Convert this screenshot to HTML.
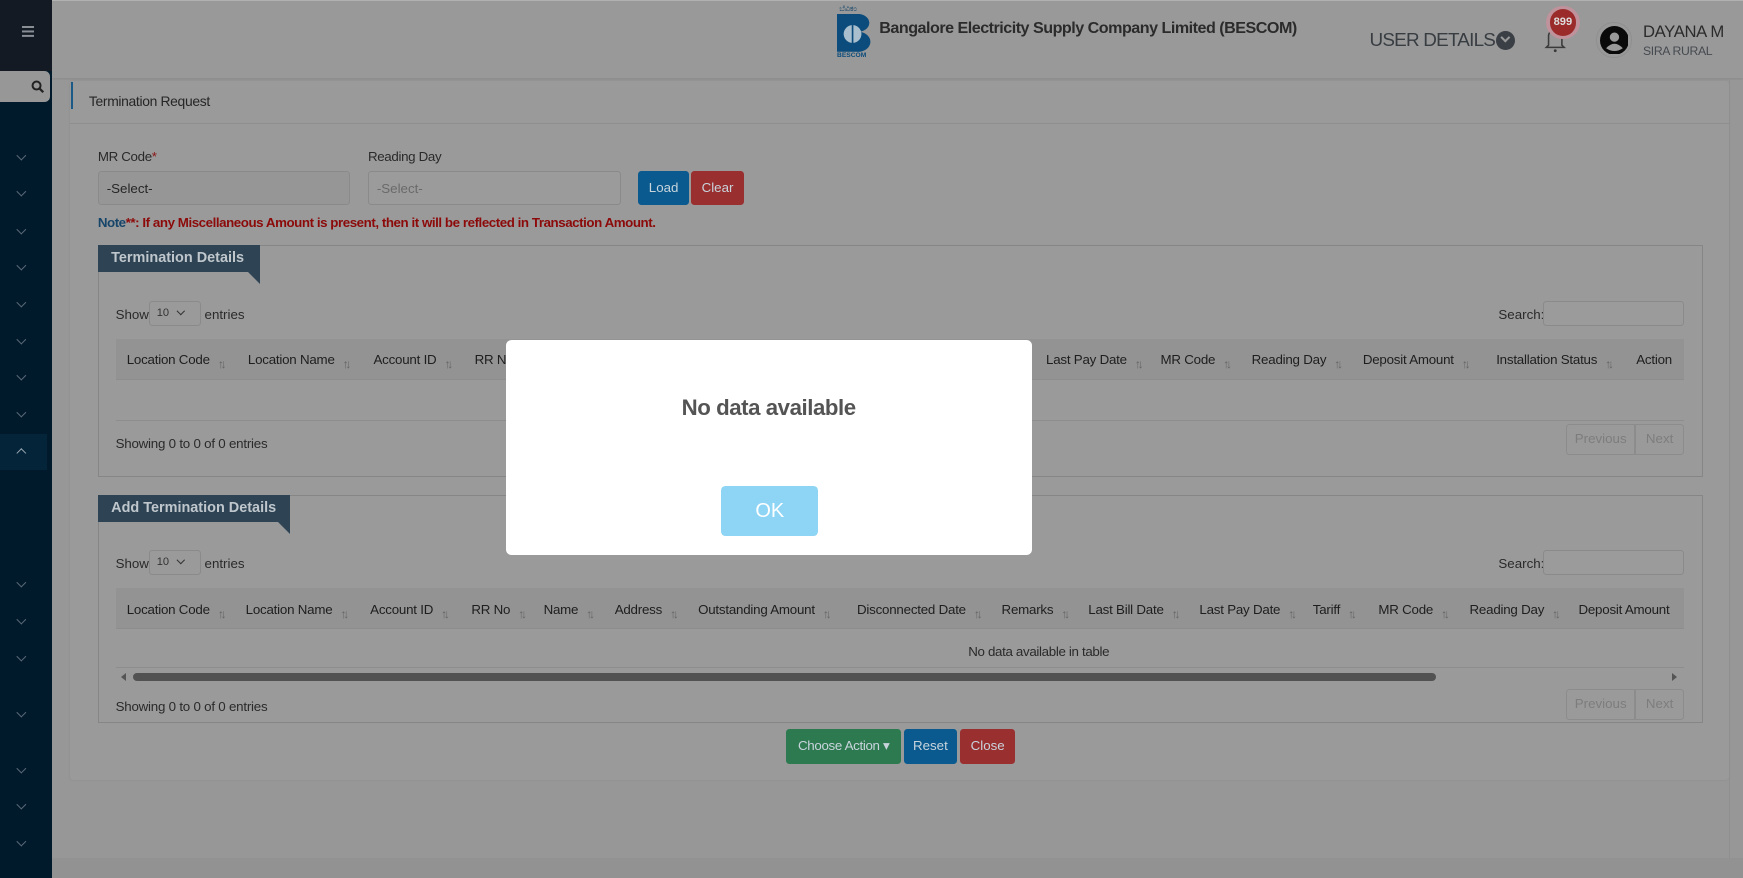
<!DOCTYPE html>
<html><head><meta charset="utf-8">
<style>
html{zoom:1.1116;}
*{box-sizing:border-box;margin:0;padding:0}
body{width:1568px;height:790px;overflow:hidden;position:relative;background:#999;font-family:"Liberation Sans",sans-serif;font-size:12px;color:#222}
.a{position:absolute}
.t{position:absolute;white-space:nowrap}
.th{position:absolute;white-space:nowrap;color:#1e1e1e;font-size:12px;letter-spacing:-0.2px}
.th i{font-style:normal;color:#666;font-size:11px;margin-left:7px;letter-spacing:-3px;position:relative;top:3px}
.chev{position:absolute;left:16px;width:6px;height:6px;border-right:1.3px solid #5d6b78;border-bottom:1.3px solid #5d6b78;transform:rotate(45deg)}
.btn{position:absolute;color:#c8d4dc;font-size:12px;text-align:center;border-radius:3px}
.box{position:absolute;border:1px solid #868686}
.tab{position:absolute;background:#2e4353;color:#bfc7cd;font-weight:bold;font-size:13px;padding:5px 0 0 12px}
.tri{position:absolute;width:0;height:0;border-top:11px solid #2e4353;border-left:11px solid transparent}
.inp{position:absolute;border:1px solid #8a8a8a;border-radius:3px;background:#9b9b9b}
.pg{position:absolute;border:1px solid #8c8c8c;color:#7d7d7d;font-size:12px;text-align:center;line-height:26px}
</style></head><body>
<div class="a" style="left:0;top:0;width:1568px;height:1px;background:#b5b5b5"></div>
<div class="a" style="left:47px;top:1px;width:1521px;height:69px;background:#999;box-shadow:0 2px 3px #8a8a8a"></div>
<div class="a" style="left:47px;top:72px;width:1521px;height:700px;background:#979797"></div>
<div class="a" style="left:47px;top:772px;width:1521px;height:18px;background:#929292"></div>
<div class="a" style="left:0;top:0;width:47px;height:790px;background:#001a2c"></div>
<div class="a" style="left:0;top:0;width:47px;height:64px;background:#131a24"></div>
<div class="a" style="left:20px;top:23px;width:11px;height:2px;background:#8a8f96;box-shadow:0 4px 0 #8a8f96,0 8px 0 #8a8f96"></div>
<div class="a" style="left:0;top:64px;width:45px;height:28px;background:#979797;border-radius:0 5px 5px 0"></div>
<svg class="a" style="left:28px;top:72px" width="12" height="12"><circle cx="5" cy="5" r="3.6" fill="none" stroke="#222" stroke-width="1.8"/><line x1="7.5" y1="7.5" x2="11" y2="11" stroke="#222" stroke-width="2"/></svg>
<div class="chev" style="top:137px"></div><div class="chev" style="top:169px"></div><div class="chev" style="top:203px"></div><div class="chev" style="top:236px"></div><div class="chev" style="top:269px"></div><div class="chev" style="top:302px"></div><div class="chev" style="top:335px"></div><div class="chev" style="top:368px"></div>
<div class="a" style="left:0;top:390px;width:42px;height:33px;background:#032439"></div>
<div class="chev" style="top:405px;transform:rotate(225deg);border-color:#9aa6b0"></div>
<div class="chev" style="top:521px"></div><div class="chev" style="top:554px"></div><div class="chev" style="top:587px"></div><div class="chev" style="top:638px"></div><div class="chev" style="top:688px"></div><div class="chev" style="top:721px"></div><div class="chev" style="top:754px"></div>
<div class="t" style="left:755px;top:4px;font-size:7px;color:#0a3f66">ಬೆವಿಕಂ</div>
<svg class="a" style="left:753px;top:13px" width="34" height="34"><path d="M0 0 H18 A10 8 0 0 1 20 16 A11 9 0 0 1 18 34 H0 Z" fill="#0b4c7c"/><circle cx="14" cy="18" r="8" fill="#a9bfce"/><line x1="14" y1="10" x2="14" y2="27" stroke="#0b4c7c" stroke-width="1.5"/></svg>
<div class="t" style="left:753px;top:47px;font-size:6px;font-weight:bold;color:#0b4c7c">BESCOM</div>
<div class="t" style="left:791px;top:17px;font-size:14.5px;font-weight:bold;color:#2b2b2b;letter-spacing:-0.45px">Bangalore Electricity Supply Company Limited (BESCOM)</div>
<div class="t" style="left:1232px;top:27px;font-size:17px;color:#383d42;letter-spacing:-0.7px">USER DETAILS</div>
<div class="a" style="left:1346px;top:28px;width:17px;height:17px;border-radius:50%;background:#3a3f45"></div>
<div class="a" style="left:1351px;top:31px;width:6px;height:6px;border-right:2px solid #999;border-bottom:2px solid #999;transform:rotate(45deg)"></div>
<svg class="a" style="left:1388px;top:22px" width="22" height="26"><path d="M5 19 V11 A6 6 0 0 1 17 11 V19 L19 21 H3 Z" fill="none" stroke="#3a3a3a" stroke-width="1.4"/><circle cx="11" cy="24" r="1.3" fill="#3a3a3a"/></svg>
<div class="a" style="left:1391px;top:5px;width:30px;height:30px;border-radius:50%;background:#c0929c"></div>
<div class="a" style="left:1394px;top:8px;width:24px;height:24px;border-radius:50%;background:#9b2b2b;color:#ddd;font-size:10px;font-weight:bold;text-align:center;line-height:24px">899</div>
<div class="a" style="left:1436px;top:20px;width:32px;height:32px;border-radius:50%;border:1px solid #8f8f8f"></div>
<svg class="a" style="left:1439px;top:23px" width="26" height="26"><circle cx="13" cy="13" r="13" fill="#0a0a0a"/><circle cx="13" cy="10" r="4.2" fill="#999"/><path d="M5.5 20 Q13 12 20.5 20 Q13 25 5.5 20Z" fill="#999"/></svg>
<div class="t" style="left:1478px;top:20px;font-size:15px;color:#2b2b2b;letter-spacing:-0.3px">DAYANA M</div>
<div class="t" style="left:1478px;top:40px;font-size:11px;color:#454a50;letter-spacing:-0.3px">SIRA RURAL</div>
<div class="a" style="left:63px;top:73px;width:1492px;height:629px;background:#9a9a9a;border-radius:3px;box-shadow:0 0 2px #8c8c8c"></div>
<div class="a" style="left:64px;top:74px;width:2px;height:24px;background:#1b5a86"></div>
<div class="t" style="left:80px;top:84px;font-size:12.5px;color:#262626;letter-spacing:-0.3px">Termination Request</div>
<div class="a" style="left:63px;top:111px;width:1492px;height:1px;background:#8e8e8e"></div>
<div class="t" style="left:88px;top:134px;color:#2a2a2a;letter-spacing:-0.3px">MR Code<span style="color:#8a1515">*</span></div>
<div class="t" style="left:331px;top:134px;color:#2a2a2a;letter-spacing:-0.3px">Reading Day</div>
<div class="inp" style="left:88px;top:154px;width:227px;height:30px;background:#969696"></div>
<div class="t" style="left:96px;top:163px;color:#262626">-Select-</div>
<div class="inp" style="left:331px;top:154px;width:228px;height:30px"></div>
<div class="t" style="left:339px;top:163px;color:#6a6a6a">-Select-</div>
<div class="btn" style="left:574px;top:154px;width:46px;height:30px;background:#0a5a8f;line-height:30px">Load</div>
<div class="btn" style="left:622px;top:154px;width:47px;height:30px;background:#9a2f2f;line-height:30px">Clear</div>
<div class="t" style="left:88px;top:193px;font-size:12px;font-weight:bold;color:#8c0a0a;letter-spacing:-0.4px"><span style="color:#17456a">Note</span>**: If any Miscellaneous Amount is present, then it will be reflected in Transaction Amount.</div>
<div class="box" style="left:88px;top:220px;width:1444px;height:209px"></div>
<div class="tab" style="left:88px;top:220px;width:146px;height:25px">Termination Details</div>
<div class="tri" style="left:223px;top:245px"></div>
<div class="t" style="left:104px;top:276px;color:#2a2a2a">Show</div>
<div class="inp" style="left:134px;top:271px;width:47px;height:22px;background:#9a9a9a"></div>
<div class="t" style="left:141px;top:276px;font-size:10px;color:#333">10</div>
<div class="a" style="left:160px;top:277px;width:5px;height:5px;border-right:1.3px solid #333;border-bottom:1.3px solid #333;transform:rotate(45deg)"></div>
<div class="t" style="left:184px;top:276px;color:#2a2a2a">entries</div>
<div class="t" style="left:1348px;top:276px;color:#2a2a2a">Search:</div>
<div class="inp" style="left:1388px;top:271px;width:127px;height:22px"></div>
<div class="a" style="left:104px;top:305px;width:1411px;height:37px;background:#939393;border-bottom:1px solid #8d8d8d"></div>
<div class="th" style="left:114px;top:317px">Location Code<i>↑↓</i></div>
<div class="th" style="left:223px;top:317px">Location Name<i>↑↓</i></div>
<div class="th" style="left:336px;top:317px">Account ID<i>↑↓</i></div>
<div class="th" style="left:427px;top:317px">RR No</div>
<div class="th" style="left:941px;top:317px">Last Pay Date<i>↑↓</i></div>
<div class="th" style="left:1044px;top:317px">MR Code<i>↑↓</i></div>
<div class="th" style="left:1126px;top:317px">Reading Day<i>↑↓</i></div>
<div class="th" style="left:1226px;top:317px">Deposit Amount<i>↑↓</i></div>
<div class="th" style="left:1346px;top:317px">Installation Status<i>↑↓</i></div>
<div class="th" style="left:1472px;top:317px">Action</div>
<div class="a" style="left:104px;top:378px;width:1411px;height:1px;background:#8d8d8d"></div>
<div class="t" style="left:104px;top:392px;color:#2a2a2a;letter-spacing:-0.2px">Showing 0 to 0 of 0 entries</div>
<div class="pg" style="left:1409px;top:381px;width:62px;height:28px;border-radius:3px 0 0 3px">Previous</div>
<div class="pg" style="left:1471px;top:381px;width:44px;height:28px;border-radius:0 3px 3px 0">Next</div>
<div class="box" style="left:88px;top:445px;width:1444px;height:205px"></div>
<div class="tab" style="left:88px;top:445px;width:173px;height:25px">Add Termination Details</div>
<div class="tri" style="left:250px;top:470px"></div>
<div class="t" style="left:104px;top:500px;color:#2a2a2a">Show</div>
<div class="inp" style="left:134px;top:495px;width:47px;height:22px;background:#9a9a9a"></div>
<div class="t" style="left:141px;top:500px;font-size:10px;color:#333">10</div>
<div class="a" style="left:160px;top:501px;width:5px;height:5px;border-right:1.3px solid #333;border-bottom:1.3px solid #333;transform:rotate(45deg)"></div>
<div class="t" style="left:184px;top:500px;color:#2a2a2a">entries</div>
<div class="t" style="left:1348px;top:500px;color:#2a2a2a">Search:</div>
<div class="inp" style="left:1388px;top:495px;width:127px;height:22px"></div>
<div class="a" style="left:104px;top:529px;width:1411px;height:37px;background:#939393;border-bottom:1px solid #8d8d8d"></div>
<div class="th" style="left:114px;top:542px">Location Code<i>↑↓</i></div>
<div class="th" style="left:221px;top:542px">Location Name<i>↑↓</i></div>
<div class="th" style="left:333px;top:542px">Account ID<i>↑↓</i></div>
<div class="th" style="left:424px;top:542px">RR No<i>↑↓</i></div>
<div class="th" style="left:489px;top:542px">Name<i>↑↓</i></div>
<div class="th" style="left:553px;top:542px">Address<i>↑↓</i></div>
<div class="th" style="left:628px;top:542px">Outstanding Amount<i>↑↓</i></div>
<div class="th" style="left:771px;top:542px">Disconnected Date<i>↑↓</i></div>
<div class="th" style="left:901px;top:542px">Remarks<i>↑↓</i></div>
<div class="th" style="left:979px;top:542px">Last Bill Date<i>↑↓</i></div>
<div class="th" style="left:1079px;top:542px">Last Pay Date<i>↑↓</i></div>
<div class="th" style="left:1181px;top:542px">Tariff<i>↑↓</i></div>
<div class="th" style="left:1240px;top:542px">MR Code<i>↑↓</i></div>
<div class="th" style="left:1322px;top:542px">Reading Day<i>↑↓</i></div>
<div class="th" style="left:1420px;top:542px">Deposit Amount</div>
<div class="t" style="left:871px;top:579px;color:#2a2a2a;letter-spacing:-0.3px">No data available in table</div>
<div class="a" style="left:104px;top:600px;width:1411px;height:1px;background:#8d8d8d"></div>
<div class="a" style="left:109px;top:605px;width:0;height:0;border-top:4px solid transparent;border-bottom:4px solid transparent;border-right:5px solid #555"></div>
<div class="a" style="left:120px;top:605px;width:1172px;height:8px;border-radius:4px;background:#525252"></div>
<div class="a" style="left:1504px;top:605px;width:0;height:0;border-top:4px solid transparent;border-bottom:4px solid transparent;border-left:5px solid #555"></div>
<div class="t" style="left:104px;top:629px;color:#2a2a2a;letter-spacing:-0.2px">Showing 0 to 0 of 0 entries</div>
<div class="pg" style="left:1409px;top:620px;width:62px;height:28px;border-radius:3px 0 0 3px">Previous</div>
<div class="pg" style="left:1471px;top:620px;width:44px;height:28px;border-radius:0 3px 3px 0">Next</div>
<div class="btn" style="left:707px;top:656px;width:104px;height:31px;background:#2e7a50;line-height:31px;letter-spacing:-0.3px">Choose Action ▾</div>
<div class="btn" style="left:813px;top:656px;width:48px;height:31px;background:#0a5a8f;line-height:31px">Reset</div>
<div class="btn" style="left:864px;top:656px;width:49px;height:31px;background:#9a2f2f;line-height:31px">Close</div>
<div class="a" style="left:1555px;top:72px;width:1px;height:700px;background:#8f8f8f"></div>
<div class="a" style="left:455px;top:306px;width:473px;height:193px;background:#fff;border-radius:5px"></div>
<div class="t" style="left:455px;top:355px;width:473px;text-align:center;font-size:20px;font-weight:bold;color:#545454;letter-spacing:-0.4px">No data available</div>
<div class="a" style="left:649px;top:437px;width:87px;height:45px;background:#8dd4f5;border-radius:4px;color:#fff;font-size:18px;text-align:center;line-height:45px">OK</div>
</body></html>
